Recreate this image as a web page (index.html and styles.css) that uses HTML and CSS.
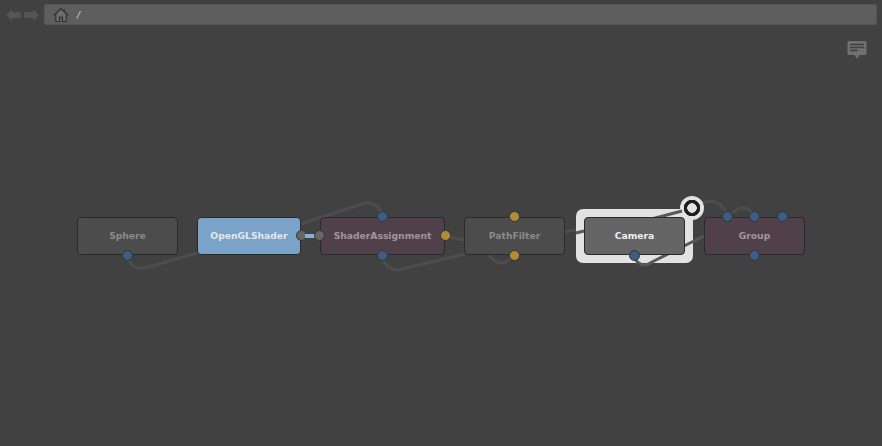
FILE: index.html
```html
<!DOCTYPE html>
<html lang="en">
<head>
<meta charset="utf-8">
<title>Node graph</title>
<link rel="stylesheet" href="styles.css">
</head>
<body>
<div class="app">
  <header class="toolbar">
    <div class="nav">
      <svg class="arrow" width="16" height="12" viewBox="0 0 16 12"><path d="M0 6 6 0V3H15V9H6V12Z"/></svg>
      <svg class="arrow" width="16" height="12" viewBox="0 0 16 12"><path d="M16 6 10 0V3H1V9H10V12Z"/></svg>
    </div>
    <div class="pathbar">
      <svg class="home" width="16" height="16" viewBox="0 0 16 16"><path class="home-fill" d="M3 8V14.500H6.500V10H9.500V14.500H13V8L8 3Z"/><path class="home-line" d="M.8 8.200 8 1.500 15.200 8.200M2.800 7V14.500H6.500V10H9.500V14.500H13.200V7M11.500 2.500V5"/></svg>
      <span class="crumb">/</span>
    </div>
  </header>
  <svg class="note" width="20" height="20" viewBox="0 0 20 20"><path class="note-bg" d="M2 1H18Q19.500 1 19.500 2.500V13.500Q19.500 15 18 15H12.500L10 19 7.500 15H2Q.5 15 .5 13.500V2.500Q.5 1 2 1Z"/><path class="note-line" d="M3 4.500H17M3 7.500H17M3 10.500H11"/></svg>
  <main class="canvas">
    <svg class="wires" width="882" height="446" viewBox="0 0 882 446">
      <g class="wire">
        <path d="M127 255C129 264 135 270 145 268L197 253"/>
        <path d="M301 224 362 204C372 201 380 206 382 216"/>
        <path d="M382 255C384 266 392 272 402 269L465 254"/>
        <path d="M489 255C495 263 503 268 514 255"/>
        <path d="M445 236 464 240"/>
        <path d="M565 232 584 228"/>
        <path d="M698 205 705 202C716 199 725 206 727 216"/>
        <path d="M727 216 738 209C745 206 752 210 754 216"/>
      </g>
    </svg>
    <div class="halo">
      <div class="halo-dot"></div>
    </div>
    <svg class="wires" width="882" height="446" viewBox="0 0 882 446">
      <g class="wire wire-on-halo">
        <path d="M576 233 584 231"/>
        <path d="M640 222 682 211"/>
        <path d="M634 255C636 264 644 268 652 262L704 236"/>
      </g>
    </svg>
    <div class="node node-grey node-sphere"><span>Sphere</span><i class="port port-blue port-bottom"></i></div>
    <div class="node node-blue node-opengl"><span>OpenGLShader</span><i class="port port-grey port-right"></i></div>
    <div class="link"></div>
    <div class="node node-plum node-assign"><span>ShaderAssignment</span><i class="port port-blue port-top"></i><i class="port port-grey port-left"></i><i class="port port-amber port-right"></i><i class="port port-blue port-bottom"></i></div>
    <div class="node node-grey node-filter"><span>PathFilter</span><i class="port port-amber port-top"></i><i class="port port-amber port-bottom"></i></div>
    <div class="node node-camera"><span>Camera</span><i class="port port-blue port-bottom"></i></div>
    <div class="node node-plum node-group"><span>Group</span><i class="port port-blue port-top port-t1"></i><i class="port port-blue port-top"></i><i class="port port-blue port-top port-t3"></i><i class="port port-blue port-bottom"></i></div>
  </main>
</div>
</body>
</html>
```
FILE: styles.css
```css
html, body {
  margin: 0;
  padding: 0;
  height: 100%;
  background: #414141;
  overflow: hidden;
}
.app {
  position: relative;
  width: 882px;
  height: 446px;
  background: #414141;
  font-family: "DejaVu Sans", sans-serif;
}
.toolbar {
  display: flex;
  align-items: center;
  gap: 5px;
  padding: 4px 5px 0 6px;
  height: 21px;
}
.nav {
  display: flex;
  gap: 1px;
}
.arrow path {
  fill: #555;
}
.pathbar {
  flex: 1;
  height: 21px;
  display: flex;
  align-items: center;
  gap: 8px;
  padding-left: 9px;
  box-sizing: border-box;
  background: #5e5e5e;
  border-radius: 3px;
  box-shadow: inset 0 0 0 1px #555;
}
.home-fill {
  fill: #6e6e6e;
}
.home-line {
  fill: none;
  stroke: #333;
  stroke-width: 1.200;
}
.crumb {
  font-size: 9px;
  font-style: italic;
  color: #d8d8d8;
}
.note {
  position: absolute;
  left: 847px;
  top: 40px;
}
.note-bg {
  fill: #707070;
}
.note-line {
  stroke: #414141;
  stroke-width: 1.500;
  fill: none;
}
.canvas {
  position: absolute;
  inset: 0;
  pointer-events: none;
}
.wires {
  position: absolute;
  left: 0;
  top: 0;
}
.wire {
  fill: none;
  stroke: #4d4d4d;
  stroke-width: 3;
}
.wire-on-halo {
  stroke: #585858;
}
.halo {
  position: absolute;
  left: 576px;
  top: 209px;
  width: 117px;
  height: 54px;
  background: #e2e2e2;
  border-radius: 7px;
}
.halo-dot {
  position: absolute;
  left: 104px;
  top: -13px;
  width: 24px;
  height: 24px;
  border-radius: 50%;
  background: radial-gradient(circle, #e2e2e2 4.500px, #1f1f1f 5px, #1f1f1f 8px, #e2e2e2 8.500px);
}
.node {
  position: absolute;
  top: 217px;
  height: 38px;
  box-sizing: border-box;
  border: 1px solid #2a2a2a;
  border-radius: 4px;
  display: flex;
  align-items: center;
  justify-content: center;
  font-size: 9.200px;
  font-weight: 700;
  padding-bottom: 1px;
}
.node-sphere { left: 77px; width: 101px; }
.node-opengl { left: 197px; width: 104px; }
.node-assign { left: 320px; width: 125px; }
.node-filter { left: 464px; width: 101px; }
.node-camera { left: 584px; width: 101px; }
.node-group { left: 704px; width: 101px; }
.node-grey {
  background: #4c4c4c;
  color: #8a8a8a;
}
.node-blue {
  background: #7ba2c8;
  color: #e6e6e6;
}
.node-plum {
  background: #50404a;
  color: #a0969c;
}
.node-camera {
  background: #656565;
  color: #efefef;
}
.port {
  position: absolute;
  width: 9px;
  height: 9px;
  border: 1px solid #333;
  border-radius: 50%;
}
.port-blue { background: #3d5c86; }
.port-grey { background: #666; }
.port-amber { background: #b08c3a; }
.port-top { top: -7px; left: calc(50% - 5.500px); }
.port-bottom { bottom: -7px; left: calc(50% - 5.500px); }
.port-left { left: -7px; top: calc(50% - 6px); }
.port-right { right: -7px; top: calc(50% - 6px); }
.port-t1 { left: calc(50% - 33px); }
.port-t3 { left: calc(50% + 22px); }
.link {
  position: absolute;
  left: 305px;
  top: 234px;
  width: 12px;
  height: 4px;
  background: #86b0d8;
}
```
